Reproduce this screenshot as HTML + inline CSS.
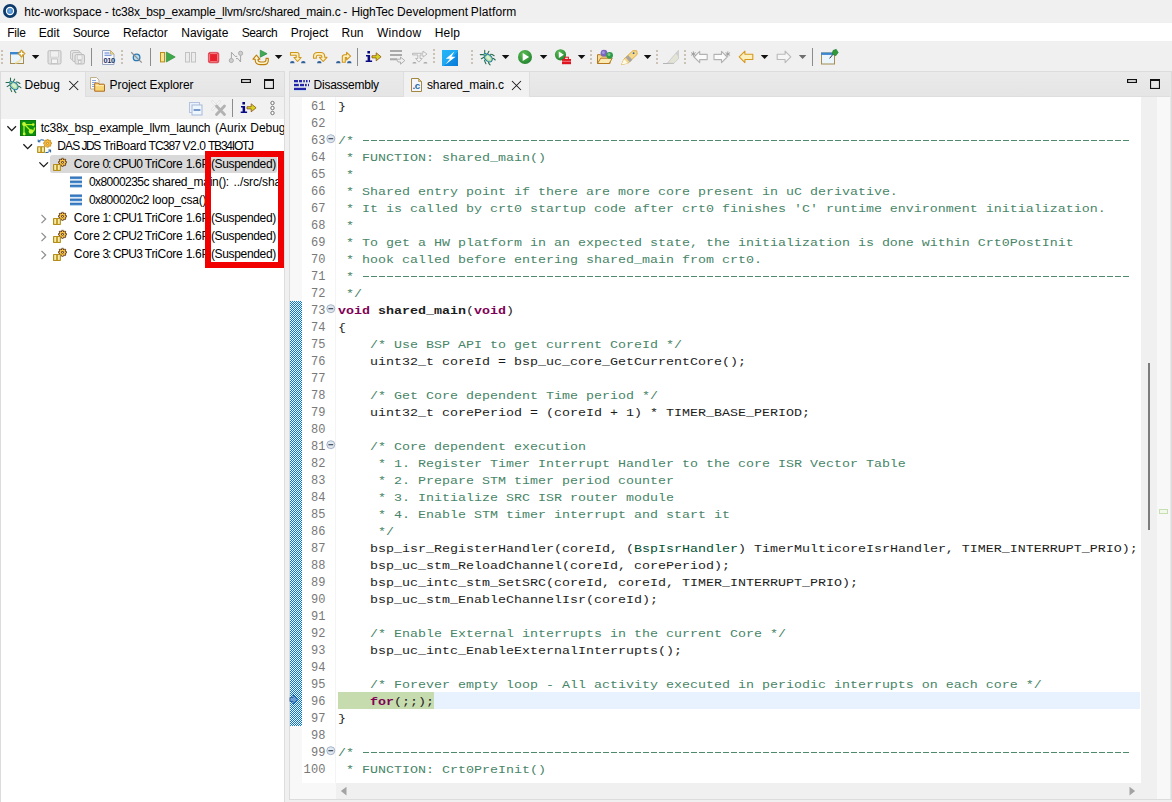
<!DOCTYPE html><html><head><meta charset="utf-8"><title>ide</title><style>
*{box-sizing:border-box}
html,body{margin:0;padding:0}
body{width:1172px;height:802px;overflow:hidden;background:#f0f0f0;font-family:"Liberation Sans",sans-serif;position:relative}
.a{position:absolute}
.t{position:absolute;white-space:pre;line-height:1;font-family:"Liberation Sans",sans-serif}
.ln{position:absolute;left:290px;width:35.6px;letter-spacing:.15px;text-align:right;height:17px;line-height:17px;margin-top:2px;font-family:"Liberation Mono",monospace;font-size:12px;color:#787878;white-space:pre}
.cl{position:absolute;left:338px;height:17px;line-height:17px;margin-top:1px;transform-origin:0 12px;transform:scaleY(0.87);font-family:"Liberation Mono",monospace;font-size:13.333px;color:#1c1c1c;white-space:pre}
.dash{position:absolute;left:362px;width:768px;height:1px;background:repeating-linear-gradient(90deg,transparent 0 1px,#4f8a6c 1px 7px,transparent 7px 8px)}
.c{color:#488568}.w{color:#7f0055;font-weight:bold}.b{font-weight:bold}.t2{color:#005032}
svg{position:absolute;overflow:visible}
</style></head><body>
<div class="a" style="left:0;top:23px;width:1172px;height:18px;background:#fff"></div>
<!-- left panel -->
<div class="a" style="left:0;top:71px;width:285px;height:731px;background:#e8e8e8;border:1px solid #dcdcdc;border-bottom:none"></div>
<div class="a" style="left:1px;top:72px;width:283px;height:25px;background:linear-gradient(#eaeaea,#e5e5e5);border-bottom:1px solid #dedede"></div><div class="a" style="left:1px;top:72px;width:85px;height:25px;background:#f1f1f1;border-right:1px solid #dedede"></div>
<div class="a" style="left:1px;top:97px;width:283px;height:22px;background:#f1f1f1"></div>
<div class="a" style="left:1px;top:119px;width:283px;height:683px;background:#fff"></div>
<div class="a" style="left:50px;top:155px;width:227px;height:18px;background:#d9d9d9;border-radius:2.5px"></div>
<!-- editor panel -->
<div class="a" style="left:289px;top:71px;width:883px;height:729px;background:#e8e8e8;border:1px solid #dcdcdc"></div>
<div class="a" style="left:290px;top:72px;width:880px;height:25px;background:linear-gradient(#eaeaea,#e5e5e5);border-bottom:1px solid #dedede"></div><div class="a" style="left:403px;top:72px;width:127px;height:25px;background:#f1f1f1;border-left:1px solid #dedede;border-right:1px solid #dedede"></div>
<div class="a" style="left:290px;top:97px;width:880px;height:702px;background:#f0f0f0"></div>
<div class="a" style="left:290px;top:97px;width:46px;height:702px;background:#f8f8f8"></div>
<div class="a" style="left:302px;top:97px;width:839px;height:686px;background:#fff"></div>
<div class="a" style="left:335px;top:97px;width:1px;height:686px;background:#f4f4f4"></div>
<div class="a" style="left:1157px;top:97px;width:13px;height:702px;background:#f8f8f8"></div>
<div class="a" style="left:338px;top:692px;width:802px;height:17px;background:#e8f2fe"></div>
<div class="a" style="left:338px;top:692px;width:96px;height:17px;background:#c6dbae"></div>
<div class="a" style="left:290px;top:301px;width:12px;height:425px;background:#0078d7;background-image:conic-gradient(#fff 25%,#0078d7 0 50%,#fff 0 75%,#0078d7 0);background-size:2px 2px"></div>
<div class="a" style="left:1148px;top:363px;width:2px;height:167px;background:#7c7c7c"></div>
<div class="a" style="left:1159px;top:509px;width:9px;height:5px;border:1px solid #c5dfb0;background:#f2f8ec"></div>
<div class="ln" style="top:97px">61</div><div class="cl" style="top:97px"><span class="k">}</span></div>
<div class="ln" style="top:114px">62</div><div class="cl" style="top:114px"></div>
<div class="ln" style="top:131px">63</div><div class="cl" style="top:131px"><span class="c">/* </span></div>
<div class="dash" style="top:140px"></div>
<div class="ln" style="top:148px">64</div><div class="cl" style="top:148px"><span class="c"> * FUNCTION: shared_main()</span></div>
<div class="ln" style="top:165px">65</div><div class="cl" style="top:165px"><span class="c"> *</span></div>
<div class="ln" style="top:182px">66</div><div class="cl" style="top:182px"><span class="c"> * Shared entry point if there are more core present in uC derivative.</span></div>
<div class="ln" style="top:199px">67</div><div class="cl" style="top:199px"><span class="c"> * It is called by crt0 startup code after crt0 finishes &#x27;C&#x27; runtime environment initialization.</span></div>
<div class="ln" style="top:216px">68</div><div class="cl" style="top:216px"><span class="c"> *</span></div>
<div class="ln" style="top:233px">69</div><div class="cl" style="top:233px"><span class="c"> * To get a HW platform in an expected state, the initialization is done within Crt0PostInit</span></div>
<div class="ln" style="top:250px">70</div><div class="cl" style="top:250px"><span class="c"> * hook called before entering shared_main from crt0.</span></div>
<div class="ln" style="top:267px">71</div><div class="cl" style="top:267px"><span class="c"> * </span></div>
<div class="dash" style="top:276px"></div>
<div class="ln" style="top:284px">72</div><div class="cl" style="top:284px"><span class="c"> */</span></div>
<div class="ln" style="top:301px">73</div><div class="cl" style="top:301px"><span class="w">void</span><span class="b"> shared_main</span><span class="k">(</span><span class="w">void</span><span class="k">)</span></div>
<div class="ln" style="top:318px">74</div><div class="cl" style="top:318px"><span class="k">{</span></div>
<div class="ln" style="top:335px">75</div><div class="cl" style="top:335px"><span class="c">    /* Use BSP API to get current CoreId */</span></div>
<div class="ln" style="top:352px">76</div><div class="cl" style="top:352px"><span class="k">    uint32_t coreId = bsp_uc_core_GetCurrentCore();</span></div>
<div class="ln" style="top:369px">77</div><div class="cl" style="top:369px"></div>
<div class="ln" style="top:386px">78</div><div class="cl" style="top:386px"><span class="c">    /* Get Core dependent Time period */</span></div>
<div class="ln" style="top:403px">79</div><div class="cl" style="top:403px"><span class="k">    uint32_t corePeriod = (coreId + 1) * TIMER_BASE_PERIOD;</span></div>
<div class="ln" style="top:420px">80</div><div class="cl" style="top:420px"></div>
<div class="ln" style="top:437px">81</div><div class="cl" style="top:437px"><span class="c">    /* Core dependent execution</span></div>
<div class="ln" style="top:454px">82</div><div class="cl" style="top:454px"><span class="c">     * 1. Register Timer Interrupt Handler to the core ISR Vector Table</span></div>
<div class="ln" style="top:471px">83</div><div class="cl" style="top:471px"><span class="c">     * 2. Prepare STM timer period counter</span></div>
<div class="ln" style="top:488px">84</div><div class="cl" style="top:488px"><span class="c">     * 3. Initialize SRC ISR router module</span></div>
<div class="ln" style="top:505px">85</div><div class="cl" style="top:505px"><span class="c">     * 4. Enable STM timer interrupt and start it</span></div>
<div class="ln" style="top:522px">86</div><div class="cl" style="top:522px"><span class="c">     */</span></div>
<div class="ln" style="top:539px">87</div><div class="cl" style="top:539px"><span class="k">    bsp_isr_RegisterHandler(coreId, (</span><span class="t2">BspIsrHandler</span><span class="k">) TimerMulticoreIsrHandler, TIMER_INTERRUPT_PRIO);</span></div>
<div class="ln" style="top:556px">88</div><div class="cl" style="top:556px"><span class="k">    bsp_uc_stm_ReloadChannel(coreId, corePeriod);</span></div>
<div class="ln" style="top:573px">89</div><div class="cl" style="top:573px"><span class="k">    bsp_uc_intc_stm_SetSRC(coreId, coreId, TIMER_INTERRUPT_PRIO);</span></div>
<div class="ln" style="top:590px">90</div><div class="cl" style="top:590px"><span class="k">    bsp_uc_stm_EnableChannelIsr(coreId);</span></div>
<div class="ln" style="top:607px">91</div><div class="cl" style="top:607px"></div>
<div class="ln" style="top:624px">92</div><div class="cl" style="top:624px"><span class="c">    /* Enable External interrupts in the current Core */</span></div>
<div class="ln" style="top:641px">93</div><div class="cl" style="top:641px"><span class="k">    bsp_uc_intc_EnableExternalInterrupts();</span></div>
<div class="ln" style="top:658px">94</div><div class="cl" style="top:658px"></div>
<div class="ln" style="top:675px">95</div><div class="cl" style="top:675px"><span class="c">    /* Forever empty loop - All activity executed in periodic interrupts on each core */</span></div>
<div class="ln" style="top:692px">96</div><div class="cl" style="top:692px"><span class="k">    </span><span class="w">for</span><span class="k">(;;);</span></div>
<div class="ln" style="top:709px">97</div><div class="cl" style="top:709px"><span class="k">}</span></div>
<div class="ln" style="top:726px">98</div><div class="cl" style="top:726px"></div>
<div class="ln" style="top:743px">99</div><div class="cl" style="top:743px"><span class="c">/* </span></div>
<div class="dash" style="top:752px"></div>
<div class="ln" style="top:760px">100</div><div class="cl" style="top:760px"><span class="c"> * FUNCTION: Crt0PreInit()</span></div>
<div class="t" style="left:24.3px;top:6px;font-size:12px;letter-spacing:-0.006px;color:#000;font-weight:400">htc-workspace</div>
<div class="t" style="left:104.8px;top:6px;font-size:12px;letter-spacing:1.000px;color:#000;font-weight:400">-</div>
<div class="t" style="left:112.1px;top:6px;font-size:12px;letter-spacing:-0.193px;color:#000;font-weight:400">tc38x_bsp_example_llvm/src/shared_main.c</div>
<div class="t" style="left:343.3px;top:6px;font-size:12px;letter-spacing:0.900px;color:#000;font-weight:400">-</div>
<div class="t" style="left:351.5px;top:6px;font-size:12px;letter-spacing:-0.166px;color:#000;font-weight:400">HighTec</div>
<div class="t" style="left:397.0px;top:6px;font-size:12px;letter-spacing:0.026px;color:#000;font-weight:400">Development</div>
<div class="t" style="left:470.8px;top:6px;font-size:12px;letter-spacing:0.114px;color:#000;font-weight:400">Platform</div>
<div class="t" style="left:7.2px;top:27px;font-size:12px;letter-spacing:-0.236px;color:#000;font-weight:400">File</div>
<div class="t" style="left:38.7px;top:27px;font-size:12px;letter-spacing:0.053px;color:#000;font-weight:400">Edit</div>
<div class="t" style="left:72.7px;top:27px;font-size:12px;letter-spacing:-0.189px;color:#000;font-weight:400">Source</div>
<div class="t" style="left:122.9px;top:27px;font-size:12px;letter-spacing:-0.082px;color:#000;font-weight:400">Refactor</div>
<div class="t" style="left:181.3px;top:27px;font-size:12px;letter-spacing:-0.047px;color:#000;font-weight:400">Navigate</div>
<div class="t" style="left:241.7px;top:27px;font-size:12px;letter-spacing:-0.405px;color:#000;font-weight:400">Search</div>
<div class="t" style="left:290.8px;top:27px;font-size:12px;letter-spacing:0.049px;color:#000;font-weight:400">Project</div>
<div class="t" style="left:341.6px;top:27px;font-size:12px;letter-spacing:-0.105px;color:#000;font-weight:400">Run</div>
<div class="t" style="left:376.9px;top:27px;font-size:12px;letter-spacing:0.319px;color:#000;font-weight:400">Window</div>
<div class="t" style="left:434.8px;top:27px;font-size:12px;letter-spacing:0.128px;color:#000;font-weight:400">Help</div>
<div class="t" style="left:24.6px;top:79px;font-size:12px;letter-spacing:-0.035px;color:#000;font-weight:400">Debug</div>
<div class="t" style="left:109.6px;top:79px;font-size:12px;letter-spacing:-0.092px;color:#000;font-weight:400">Project Explorer</div>
<div class="t" style="left:313.6px;top:79px;font-size:12px;letter-spacing:-0.256px;color:#000;font-weight:400">Disassembly</div>
<div class="t" style="left:427.0px;top:79px;font-size:12px;letter-spacing:-0.148px;color:#000;font-weight:400">shared_main.c</div>
<div class="t" style="left:40.7px;top:122px;font-size:12px;letter-spacing:-0.255px;color:#000;font-weight:400">tc38x_bsp_example_llvm_launch</div>
<div class="t" style="left:215.0px;top:122px;font-size:12px;letter-spacing:0.026px;color:#000;font-weight:400">(Aurix</div>
<div class="t" style="left:250.3px;top:122px;font-size:12px;letter-spacing:-0.035px;color:#000;font-weight:400">Debug</div>
<div class="t" style="left:57.3px;top:140px;font-size:12px;letter-spacing:-0.863px;color:#000;font-weight:400">DAS</div>
<div class="t" style="left:81.4px;top:140px;font-size:12px;letter-spacing:-1.391px;color:#000;font-weight:400">JDS</div>
<div class="t" style="left:103.2px;top:140px;font-size:12px;letter-spacing:-0.347px;color:#000;font-weight:400">TriBoard</div>
<div class="t" style="left:148.6px;top:140px;font-size:12px;letter-spacing:-0.946px;color:#000;font-weight:400">TC387</div>
<div class="t" style="left:182.5px;top:140px;font-size:12px;letter-spacing:-0.397px;color:#000;font-weight:400">V2.0</div>
<div class="t" style="left:208.0px;top:140px;font-size:12px;letter-spacing:-1.223px;color:#000;font-weight:400">TB34IOTJ</div>
<div class="t" style="left:73.7px;top:158px;font-size:12px;letter-spacing:0.046px;color:#000;font-weight:400">Core</div>
<div class="t" style="left:102.5px;top:158px;font-size:12px;letter-spacing:-1.208px;color:#000;font-weight:400">0:</div>
<div class="t" style="left:113.1px;top:158px;font-size:12px;letter-spacing:-0.754px;color:#000;font-weight:400">CPU0</div>
<div class="t" style="left:144.8px;top:158px;font-size:12px;letter-spacing:-0.280px;color:#000;font-weight:400">TriCore</div>
<div class="t" style="left:185.7px;top:158px;font-size:12px;letter-spacing:-0.322px;color:#000;font-weight:400">1.6P</div>
<div class="t" style="left:210.9px;top:158px;font-size:12px;letter-spacing:-0.338px;color:#000;font-weight:400">(Suspended)</div>
<div class="t" style="left:88.9px;top:176px;font-size:12px;letter-spacing:-0.539px;color:#000;font-weight:400">0x8000235c</div>
<div class="t" style="left:152.2px;top:176px;font-size:12px;letter-spacing:-0.286px;color:#000;font-weight:400">shared_main():</div>
<div class="t" style="left:233.5px;top:176px;font-size:12px;letter-spacing:-0.109px;color:#000;font-weight:400">../src/sha</div>
<div class="t" style="left:88.9px;top:194px;font-size:12px;letter-spacing:-0.539px;color:#000;font-weight:400">0x800020c2</div>
<div class="t" style="left:152.2px;top:194px;font-size:12px;letter-spacing:-0.183px;color:#000;font-weight:400">loop_csa()</div>
<div class="t" style="left:73.7px;top:212px;font-size:12px;letter-spacing:0.046px;color:#000;font-weight:400">Core</div>
<div class="t" style="left:102.5px;top:212px;font-size:12px;letter-spacing:-1.208px;color:#000;font-weight:400">1:</div>
<div class="t" style="left:113.1px;top:212px;font-size:12px;letter-spacing:-0.754px;color:#000;font-weight:400">CPU1</div>
<div class="t" style="left:144.8px;top:212px;font-size:12px;letter-spacing:-0.280px;color:#000;font-weight:400">TriCore</div>
<div class="t" style="left:185.7px;top:212px;font-size:12px;letter-spacing:-0.322px;color:#000;font-weight:400">1.6P</div>
<div class="t" style="left:210.9px;top:212px;font-size:12px;letter-spacing:-0.338px;color:#000;font-weight:400">(Suspended)</div>
<div class="t" style="left:73.7px;top:230px;font-size:12px;letter-spacing:0.046px;color:#000;font-weight:400">Core</div>
<div class="t" style="left:102.5px;top:230px;font-size:12px;letter-spacing:-1.208px;color:#000;font-weight:400">2:</div>
<div class="t" style="left:113.1px;top:230px;font-size:12px;letter-spacing:-0.754px;color:#000;font-weight:400">CPU2</div>
<div class="t" style="left:144.8px;top:230px;font-size:12px;letter-spacing:-0.280px;color:#000;font-weight:400">TriCore</div>
<div class="t" style="left:185.7px;top:230px;font-size:12px;letter-spacing:-0.322px;color:#000;font-weight:400">1.6P</div>
<div class="t" style="left:210.9px;top:230px;font-size:12px;letter-spacing:-0.338px;color:#000;font-weight:400">(Suspended)</div>
<div class="t" style="left:73.7px;top:248px;font-size:12px;letter-spacing:0.046px;color:#000;font-weight:400">Core</div>
<div class="t" style="left:102.5px;top:248px;font-size:12px;letter-spacing:-1.208px;color:#000;font-weight:400">3:</div>
<div class="t" style="left:113.1px;top:248px;font-size:12px;letter-spacing:-0.754px;color:#000;font-weight:400">CPU3</div>
<div class="t" style="left:144.8px;top:248px;font-size:12px;letter-spacing:-0.280px;color:#000;font-weight:400">TriCore</div>
<div class="t" style="left:185.7px;top:248px;font-size:12px;letter-spacing:-0.322px;color:#000;font-weight:400">1.6P</div>
<div class="t" style="left:210.9px;top:248px;font-size:12px;letter-spacing:-0.338px;color:#000;font-weight:400">(Suspended)</div>
<div class="a" style="left:284px;top:97px;width:5px;height:705px;background:#f0f0f0;border-left:1px solid #dcdcdc"></div>
<!-- red box -->
<div class="a" style="left:205px;top:151px;width:79px;height:117px;border:6px solid #f00000"></div>
<svg width="1172" height="802" viewBox="0 0 1172 802" style="left:0;top:0">
<circle cx="10" cy="11" r="7" fill="#0b3a6b"/><circle cx="10" cy="11" r="4.2" fill="#fff"/><circle cx="10" cy="11" r="3" fill="#4f8fcf"/><circle cx="10" cy="11" r="1.4" fill="#6aa5dc"/>
<rect x="1.1" y="50.1" width="1.8" height="1.8" fill="#c4b8a6"/>
<rect x="1.1" y="54.1" width="1.8" height="1.8" fill="#c4b8a6"/>
<rect x="1.1" y="58.1" width="1.8" height="1.8" fill="#c4b8a6"/>
<rect x="1.1" y="62.1" width="1.8" height="1.8" fill="#c4b8a6"/>
<rect x="10.5" y="52.5" width="13" height="11" fill="#e9f4fc" stroke="#a68c4e"/><rect x="10" y="52" width="11" height="2.4" fill="#3b86cf"/><path d="M15 63 Q21 62 22 56" stroke="#f3e3a8" stroke-width="1.6" fill="none"/><path d="M21.5 49.8l3.6 3.8-3.6 3.8-3.6-3.8z" fill="#d6a531" stroke="#b98a1e" stroke-width=".6"/><path d="M21.5 51.6v4M19.5 53.6h4" stroke="#fff" stroke-width="1.1"/>
<path d="M31.8 55h7.6l-3.8 4.1z" fill="#111"/>
<rect x="48.0" y="50.5" width="13" height="13.5" rx="1.5" fill="#e2e2e2" stroke="#bcbcbc"/><rect x="50.5" y="51" width="8" height="6.1" fill="#f0f0f0" stroke="#c6c6c6" stroke-width=".6"/><rect x="51.5" y="59.0" width="6" height="4.5" fill="#f4f4f4" stroke="#b8b8b8" stroke-width=".7"/>
<rect x="70.5" y="50.5" width="9" height="9" rx="1.5" fill="#e6e6e6" stroke="#c4c4c4"/><rect x="72.5" y="52.5" width="9" height="9" rx="1.5" fill="#e6e6e6" stroke="#c4c4c4"/>
<rect x="75.0" y="54.5" width="9.5" height="9.5" rx="1.5" fill="#e2e2e2" stroke="#bcbcbc"/><rect x="77.5" y="55" width="4.5" height="4.4" fill="#f0f0f0" stroke="#c6c6c6" stroke-width=".6"/><rect x="78.5" y="60.5" width="2.5" height="3.0" fill="#f4f4f4" stroke="#b8b8b8" stroke-width=".7"/>
<rect x="91.0" y="48" width="1" height="18" fill="#8c8c8c"/>
<path d="M102.5 50.5h8l3.5 3.5v10.5h-11.5z" fill="#f6f8fc" stroke="#9aa7c4"/><path d="M110.5 50.5l3.5 3.5h-3.5z" fill="#e9d9a8" stroke="#c2a863" stroke-width=".8"/><path d="M104.5 53h5M104.5 55.3h7" stroke="#5b7fd1" stroke-width="1.1"/><text x="103.4" y="63.3" font-family="Liberation Sans" font-weight="700" font-size="7.4" fill="#1a2d5e" letter-spacing="-.3">010</text>
<rect x="121.1" y="50.1" width="1.8" height="1.8" fill="#c4b8a6"/>
<rect x="121.1" y="54.1" width="1.8" height="1.8" fill="#c4b8a6"/>
<rect x="121.1" y="58.1" width="1.8" height="1.8" fill="#c4b8a6"/>
<rect x="121.1" y="62.1" width="1.8" height="1.8" fill="#c4b8a6"/>
<circle cx="136.6" cy="57.4" r="3.3" fill="#bcdcf0" stroke="#2b79b3" stroke-width="1.3"/><path d="M131.2 52.2L141.8 62.6" stroke="#8f8f8f" stroke-width="1.2"/>
<rect x="150.0" y="48" width="1" height="18" fill="#8c8c8c"/>
<rect x="160.5" y="52.5" width="4" height="9.4" fill="#fbe38e" stroke="#b98d1a"/><path d="M166.3 52l8.9 5-8.9 5z" fill="#3fa949" stroke="#2f8c3a" stroke-width=".7"/>
<rect x="185.5" y="52.5" width="4" height="9.5" fill="#ececec" stroke="#c2c2c2"/><rect x="191.5" y="52.5" width="4" height="9.5" fill="#ececec" stroke="#c2c2c2"/>
<rect x="208.4" y="52.4" width="10.4" height="10.4" rx="1.6" fill="#e8202c" stroke="#d8505a" stroke-width=".9"/><rect x="209.6" y="53.6" width="8" height="8" rx=".8" fill="none" stroke="#f59aa0" stroke-width=".8"/>
<path d="M231.4 58.4V52.2l3.8 4.2h2M236 58.6h2l2.6 3.4v-6.6" fill="none" stroke="#a6a6a6" stroke-width="1"/><circle cx="231.3" cy="60.5" r="2.1" fill="#cfcfcf" stroke="#a2a2a2" stroke-width=".8"/><circle cx="240.6" cy="53.3" r="2.1" fill="#cfcfcf" stroke="#a2a2a2" stroke-width=".8"/>
<path d="M256.4 55.1l3.5 4.1h-1.9v.6q0 2.2 2.6 2.2h3q2.4 0 2.4-2.2v-1.4h2.3v1.8q0 4.4-4.4 4.4h-3.8q-4.9 0-4.9-4.6v-.8h-2.2z" fill="#fdf4cf" stroke="#bd7f0c" stroke-width="1.1" stroke-linejoin="round"/><path d="M260.3 50.2l6.8 3.5-6.8 3.5z" fill="#43a853" stroke="#1f8a3c" stroke-width=".7"/>
<path d="M274.8 55h7.6l-3.8 4.1z" fill="#111"/>
<path d="M290.5 52.5h6.5q2 0 2 2v3h2.2l-3.6 4-3.6-4h2.2v-2.2h-5.7z" fill="#fdeebb" stroke="#cf961f" stroke-width="1.1" stroke-linejoin="round"/>
<path d="M290 63.2a2.3 2.3 0 0 1 4.6 0z" fill="#2f5f96"/>
<path d="M301 63.2a2.3 2.3 0 0 1 4.6 0z" fill="#2f5f96"/>
<path d="M313.5 58.3v-1.8q0-4 4-4h3.2q4 0 4 4v0.8h2.3l-3.8 4.2-3.8-4.2h2.5v-0.3q0-1.7-1.7-1.7h-2.2q-1.7 0-1.7 1.7v1.3z" fill="#fdeebb" stroke="#cf961f" stroke-width="1.1" stroke-linejoin="round"/>
<path d="M317 63.2a2.3 2.3 0 0 1 4.6 0z" fill="#2f5f96"/>
<path d="M342.3 62.3v-5.3q0-2.3 2.3-2.3h2v-2.4l4 3.8-4 3.8v-2.4h-1.3v4.8z" fill="#fdeebb" stroke="#cf961f" stroke-width="1.1" stroke-linejoin="round"/>
<path d="M336 63.2a2.3 2.3 0 0 1 4.6 0z" fill="#2f5f96"/>
<path d="M347 63.2a2.3 2.3 0 0 1 4.6 0z" fill="#2f5f96"/>
<rect x="357.0" y="48" width="1" height="18" fill="#8c8c8c"/>
<path d="M367.4 51h2.6v2.5h-2.6zM366.0 55h4.1v5.6h2v1.4h-6.4v-1.4h1.9v-4.2h-1.6z" fill="#0a0a82"/><path d="M372 55.7h4.2v-2.9l4.9 4-4.9 4v-2.9h-4.2z" fill="#d6d422" stroke="#8a4a0c" stroke-width=".75" stroke-linejoin="round"/>
<path d="M390 51h12M390 55h12M390 59.2h7" stroke="#a9a9a9" stroke-width="2"/><path d="M396.5 59.2h4v-2.2l4.3 3.6-4.3 3.6v-2.2h-2.5z" fill="#f0f0f0" stroke="#a9a9a9" stroke-width=".9"/>
<path d="M412.5 53.3h10.5v-2.2l4 3-4 3v-2.2h-3v3.6h2.2l-3.3 3.6-3.3-3.6h2.2v-3.6h-5.3z" fill="#f3f3f3" stroke="#b4b4b4" stroke-width=".9" stroke-linejoin="round"/>
<path d="M412.4 63.4a2 1.4 0 0 1 4 0zM423.4 63.4a2 1.4 0 0 1 4 0z" fill="#a8a8a8"/>
<rect x="433.1" y="49.1" width="1.8" height="1.8" fill="#c4b8a6"/>
<rect x="433.1" y="53.1" width="1.8" height="1.8" fill="#c4b8a6"/>
<rect x="433.1" y="57.1" width="1.8" height="1.8" fill="#c4b8a6"/>
<rect x="433.1" y="61.1" width="1.8" height="1.8" fill="#c4b8a6"/>
<defs><linearGradient id="lg1" x1="0" y1="0" x2="1" y2="1"><stop offset="0" stop-color="#22b4f6"/><stop offset=".55" stop-color="#1ea7f2"/><stop offset=".56" stop-color="#0f8fe6"/><stop offset="1" stop-color="#0a7bd6"/></linearGradient></defs><rect x="442" y="50" width="16" height="16" fill="url(#lg1)"/><path d="M454.4 51.6l-8.6 7.2h4.2l-4.4 5.8 10-7.8h-4.2z" fill="#fff"/>
<rect x="471.1" y="50.1" width="1.8" height="1.8" fill="#c4b8a6"/>
<rect x="471.1" y="54.1" width="1.8" height="1.8" fill="#c4b8a6"/>
<rect x="471.1" y="58.1" width="1.8" height="1.8" fill="#c4b8a6"/>
<rect x="471.1" y="62.1" width="1.8" height="1.8" fill="#c4b8a6"/>
<g transform="translate(474.23 -27.80)"><path d="M10.5 78v2.8M14.7 79.1l-1.4 2.6M6 82.4h3.2M7.1 86.6l2.7-1.6M10.2 88.2l.6 1.4.9 2M14.3 90l.3 1.2 1.3 1.5M16.2 82.1l1.8.2 1.9 1.2M18 86.2l1.4.2 1.6 1.4" stroke="#2a6b4a" stroke-width="1.05" fill="none" stroke-linecap="round"/><ellipse cx="14.07" cy="85.8" rx="4.5" ry="3.2" transform="rotate(42 14.07 85.8)" fill="#b4dda0" stroke="#1d78a2" stroke-width="1.1"/><ellipse cx="14.2" cy="85.6" rx="2.6" ry="1.5" transform="rotate(42 14.2 85.6)" fill="#daf0cf"/><circle cx="10.8" cy="82.5" r="1.35" fill="#8fc87a" stroke="#1d78a2" stroke-width=".9"/></g>
<path d="M501.8 55h7.6l-3.8 4.1z" fill="#111"/>
<defs><radialGradient id="rg1" cx=".4" cy=".3" r=".8"><stop offset="0" stop-color="#5dbb55"/><stop offset="1" stop-color="#1d7f2c"/></radialGradient></defs>
<circle cx="525" cy="57" r="7" fill="url(#rg1)"/><path d="M522.7 53l6.4 4-6.4 4z" fill="#fff"/>
<path d="M539.8 55h7.6l-3.8 4.1z" fill="#111"/>
<circle cx="560.5" cy="54.8" r="5.6" fill="url(#rg1)"/><path d="M558.8 51.6l5 3.2-5 3.2z" fill="#fff"/><rect x="562" y="59" width="9" height="5.2" fill="#e0141e"/><rect x="564.6" y="57.2" width="3.8" height="2.2" fill="none" stroke="#e0141e" stroke-width="1"/><path d="M562 61.3h9" stroke="#f7a6aa" stroke-width=".7"/>
<path d="M577.8 55h7.6l-3.8 4.1z" fill="#111"/>
<rect x="590.1" y="50.1" width="1.8" height="1.8" fill="#c4b8a6"/>
<rect x="590.1" y="54.1" width="1.8" height="1.8" fill="#c4b8a6"/>
<rect x="590.1" y="58.1" width="1.8" height="1.8" fill="#c4b8a6"/>
<rect x="590.1" y="62.1" width="1.8" height="1.8" fill="#c4b8a6"/>
<path d="M597.5 63.5v-8.8h3l1 1.2h8.5v7.6z" fill="#f7dc94" stroke="#b7791f" stroke-width="1"/><path d="M597.5 63.5l3.2-5.3h11.5l-3 5.3z" fill="#fbe9b4" stroke="#b7791f" stroke-width="1" stroke-linejoin="round"/><circle cx="604" cy="53.2" r="3.4" fill="#7a68c0"/><circle cx="603.4" cy="52.4" r="1.5" fill="#a597dc"/><circle cx="609.6" cy="55.3" r="3.4" fill="#2f9a4a"/><circle cx="609" cy="54.5" r="1.5" fill="#74c884"/>
<path d="M621.6 64.6l2.4-5.6 9-8.4 3.8 0.2 0.4 3.6-9 8.6z" fill="#f5d88a" stroke="#d9a531" stroke-width=".8"/><path d="M625.6 57.6l4.2 4.6 2.6-2.4-4.2-4.6z" fill="#a8a4a4"/><path d="M621.6 64.6l2.4-5.6 4 4.2z" fill="#fffbe8"/><circle cx="633.6" cy="53.2" r=".9" fill="#2a5ea8"/>
<path d="M643.8 55h7.6l-3.8 4.1z" fill="#111"/>
<rect x="656.1" y="50.1" width="1.8" height="1.8" fill="#c4b8a6"/>
<rect x="656.1" y="54.1" width="1.8" height="1.8" fill="#c4b8a6"/>
<rect x="656.1" y="58.1" width="1.8" height="1.8" fill="#c4b8a6"/>
<rect x="656.1" y="62.1" width="1.8" height="1.8" fill="#c4b8a6"/>
<path d="M663 63.5h11" stroke="#b4b4b4" stroke-width="1"/><path d="M667.5 63l8-9.5 3-3.3v8.5l-4.8 4.6z" fill="#e3e3d6" stroke="#c4c4c4" stroke-width=".7"/><path d="M675.5 53.5l3-3.3v6.6z" fill="#cfcfcf"/>
<rect x="684.1" y="50.1" width="1.8" height="1.8" fill="#c4b8a6"/>
<rect x="684.1" y="54.1" width="1.8" height="1.8" fill="#c4b8a6"/>
<rect x="684.1" y="58.1" width="1.8" height="1.8" fill="#c4b8a6"/>
<rect x="684.1" y="62.1" width="1.8" height="1.8" fill="#c4b8a6"/>
<path d="M694 57.0l5.7 -5.7v3.08h7.50v5.24h-7.50v3.08z" fill="#fbfbfb" stroke="#b2b2b2" stroke-width="1.1" stroke-linejoin="round"/>
<path d="M693.4 51.4v5.2M691.1 52.6l4.6 2.8M691.1 55.4l4.6-2.8" stroke="#9a9a9a" stroke-width=".9"/>
<path d="M714 57.0l5.7 -5.7v3.08h7.50v5.24h-7.50v3.08z" fill="#fbfbfb" stroke="#b2b2b2" stroke-width="1.1" stroke-linejoin="round" transform="translate(1441.2 0) scale(-1 1)"/>
<path d="M727.8 51.4v5.2M725.5 52.6l4.6 2.8M725.5 55.4l4.6-2.8" stroke="#9a9a9a" stroke-width=".9"/>
<path d="M739.2 56.900000000000006l5.7 -5.7v3.08h7.90v5.24h-7.90v3.08z" fill="#fdf0bf" stroke="#d8981f" stroke-width="1.1" stroke-linejoin="round"/>
<path d="M760.8 55h7.6l-3.8 4.1z" fill="#111"/>
<path d="M777.2 56.900000000000006l5.7 -5.7v3.08h7.90v5.24h-7.90v3.08z" fill="#f6f6f6" stroke="#b9b9b9" stroke-width="1.1" stroke-linejoin="round" transform="translate(1568.0 0) scale(-1 1)"/>
<path d="M798.8 55h7.6l-3.8 4.1z" fill="#6e6e6e"/>
<rect x="812.0" y="48" width="1" height="18" fill="#8c8c8c"/>
<rect x="821.5" y="53" width="13" height="11" fill="#eaf5fc" stroke="#a68c4e"/><rect x="821" y="52.5" width="14" height="2.4" fill="#3b86cf"/><path d="M833 50.5l3.2-1.2 2 3.2-2.4 3.2-3.6-1.6z" fill="#2f9a3a" stroke="#1f7a2a" stroke-width=".6"/><path d="M832.6 54.8l-3 3.6" stroke="#333" stroke-width="1"/>
<g transform="translate(0.00 0.00)"><path d="M10.5 78v2.8M14.7 79.1l-1.4 2.6M6 82.4h3.2M7.1 86.6l2.7-1.6M10.2 88.2l.6 1.4.9 2M14.3 90l.3 1.2 1.3 1.5M16.2 82.1l1.8.2 1.9 1.2M18 86.2l1.4.2 1.6 1.4" stroke="#2a6b4a" stroke-width="1.05" fill="none" stroke-linecap="round"/><ellipse cx="14.07" cy="85.8" rx="4.5" ry="3.2" transform="rotate(42 14.07 85.8)" fill="#b4dda0" stroke="#1d78a2" stroke-width="1.1"/><ellipse cx="14.2" cy="85.6" rx="2.6" ry="1.5" transform="rotate(42 14.2 85.6)" fill="#daf0cf"/><circle cx="10.8" cy="82.5" r="1.35" fill="#8fc87a" stroke="#1d78a2" stroke-width=".9"/></g>
<path d="M69.2 81l9 9M78.2 81l-9 9" stroke="#1a1a1a" stroke-width="1.05" fill="none"/>
<path d="M512 81l9 9M521 81l-9 9" stroke="#1a1a1a" stroke-width="1.05" fill="none"/>
<path d="M90.5 77.5h6l2.5 2.5v9h-8.5z" fill="#fafafa" stroke="#b9a980" stroke-width=".9"/><path d="M92 80.5h4M92 82.5h4M92 84.5h3M92 86.5h3" stroke="#6f93d6" stroke-width=".8"/><path d="M94.7 91.2v-7.6q0-.6.6-.6h2.6l1 1.2h5q.6 0 .6.6v6.4z" fill="#f8d676" stroke="#b06a1c" stroke-width="1" stroke-linejoin="round"/><path d="M95.6 85.7h8.2" stroke="#fdeeb8" stroke-width="1"/>
<rect x="241.6" y="79.6" width="8.8" height="2.8" fill="#fff" stroke="#111" stroke-width="1.2"/>
<rect x="264.55" y="79.55" width="8.9" height="8.9" fill="none" stroke="#111" stroke-width="1.1"/><rect x="264" y="79" width="10" height="2" fill="#111"/>
<rect x="1127.6" y="79.6" width="8.8" height="2.8" fill="#fff" stroke="#111" stroke-width="1.2"/>
<rect x="1150.55" y="79.55" width="8.9" height="8.9" fill="none" stroke="#111" stroke-width="1.1"/><rect x="1150" y="79" width="10" height="2" fill="#111"/>
<rect x="189.5" y="102.5" width="10" height="10" fill="#eaf3fb" stroke="#b4c3df"/><rect x="192" y="105" width="10" height="10" fill="#eef7fd" stroke="#a7b9d9"/><path d="M193.6 110h6.8" stroke="#1f55a4" stroke-width="1.15"/>
<path d="M212.5 101.5l7 8M219.5 101.5l-7 8" stroke="#dcdcdc" stroke-width="2.6" stroke-linecap="round"/><path d="M212.5 101.5l7 8M219.5 101.5l-7 8" stroke="#f6f6f6" stroke-width="1.2" stroke-linecap="round"/><path d="M216.5 106l8 8.5M224.5 106l-8 8.5" stroke="#b2b2b2" stroke-width="2.8" stroke-linecap="round"/>
<rect x="232.0" y="99" width="1" height="18" fill="#8c8c8c"/>
<path d="M242.39999999999998 102h2.6v2.5h-2.6zM241.0 106h4.1v5.6h2v1.4h-6.4v-1.4h1.9v-4.2h-1.6z" fill="#0a0a82"/><path d="M247 106.7h4.2v-2.9l4.9 4-4.9 4v-2.9h-4.2z" fill="#d6d422" stroke="#8a4a0c" stroke-width=".75" stroke-linejoin="round"/>
<circle cx="272.5" cy="103" r="1.7" fill="#fff" stroke="#555" stroke-width=".8"/>
<circle cx="272.5" cy="108" r="1.7" fill="#fff" stroke="#555" stroke-width=".8"/>
<circle cx="272.5" cy="113" r="1.7" fill="#fff" stroke="#555" stroke-width=".8"/>
<path d="M7.4 126.3l4.3 4.3 4.3-4.3" stroke="#1a1a1a" stroke-width="1.3" fill="none"/>
<path d="M23.4 144.3l4.3 4.3 4.3-4.3" stroke="#1a1a1a" stroke-width="1.3" fill="none"/>
<path d="M39.4 162.4l4.3 4.3 4.3-4.3" stroke="#1a1a1a" stroke-width="1.3" fill="none"/>
<path d="M41.5 214.8l4.2 4.2-4.2 4.2" stroke="#8c8c8c" stroke-width="1.2" fill="none"/>
<path d="M41.5 232.8l4.2 4.2-4.2 4.2" stroke="#8c8c8c" stroke-width="1.2" fill="none"/>
<path d="M41.5 250.8l4.2 4.2-4.2 4.2" stroke="#8c8c8c" stroke-width="1.2" fill="none"/>
<rect x="20" y="120" width="16" height="16" fill="#0c8f10"/><rect x="20.5" y="120.5" width="15" height="15" fill="none" stroke="#0a7a0c"/><path d="M24 124l8 8M24 124v10M24 124.6h9M32 132q2.5-1 2.6-4.5" stroke="#b4f21e" stroke-width="1.3" fill="none"/><circle cx="24" cy="124" r="1.9" fill="#c6f83a"/><circle cx="31" cy="131.5" r="2.3" fill="#c6f83a"/><circle cx="33.2" cy="124.6" r="1.3" fill="#c6f83a"/><circle cx="24.2" cy="134" r="1.4" fill="#c6f83a"/>
<g transform="translate(47.6 143.3)"><circle r="3.35" fill="#c9942c"/><rect x="-1" y="-4.35" width="2" height="2.2" fill="#c9942c" transform="rotate(0)"/><rect x="-1" y="-4.35" width="2" height="2.2" fill="#c9942c" transform="rotate(45)"/><rect x="-1" y="-4.35" width="2" height="2.2" fill="#c9942c" transform="rotate(90)"/><rect x="-1" y="-4.35" width="2" height="2.2" fill="#c9942c" transform="rotate(135)"/><rect x="-1" y="-4.35" width="2" height="2.2" fill="#c9942c" transform="rotate(180)"/><rect x="-1" y="-4.35" width="2" height="2.2" fill="#c9942c" transform="rotate(225)"/><rect x="-1" y="-4.35" width="2" height="2.2" fill="#c9942c" transform="rotate(270)"/><rect x="-1" y="-4.35" width="2" height="2.2" fill="#c9942c" transform="rotate(315)"/><circle r="2.55" fill="#f6b93c"/><rect x="-.45" y="-3.6" width=".9" height="1.6" fill="#f6b93c" transform="rotate(0)"/><rect x="-.45" y="-3.6" width=".9" height="1.6" fill="#f6b93c" transform="rotate(45)"/><rect x="-.45" y="-3.6" width=".9" height="1.6" fill="#f6b93c" transform="rotate(90)"/><rect x="-.45" y="-3.6" width=".9" height="1.6" fill="#f6b93c" transform="rotate(135)"/><rect x="-.45" y="-3.6" width=".9" height="1.6" fill="#f6b93c" transform="rotate(180)"/><rect x="-.45" y="-3.6" width=".9" height="1.6" fill="#f6b93c" transform="rotate(225)"/><rect x="-.45" y="-3.6" width=".9" height="1.6" fill="#f6b93c" transform="rotate(270)"/><rect x="-.45" y="-3.6" width=".9" height="1.6" fill="#f6b93c" transform="rotate(315)"/><circle r="1.35" fill="#c9942c"/><circle r=".6" fill="#efe2d0"/></g>
<rect x="37.1" y="146.3" width="7.9" height="6.6" rx=".6" fill="#b48e18"/><rect x="38.300000000000004" y="147.3" width="2" height="4.6" fill="#fbeca4"/><rect x="41.9" y="147.3" width="2" height="4.6" fill="#fbeca4"/>
<path d="M44 140.2q-3-1.4-5.6 1.2M38.2 139.6v2.2h2.2" stroke="#1d5c9c" stroke-width="1" fill="none"/><path d="M45.4 152.6q3 .6 5-2.4M50.6 152.4v-2.4h-2.2" stroke="#1d5c9c" stroke-width="1" fill="none"/>
<g transform="translate(62.5 162.3)"><circle r="3.45" fill="#5e3a22"/><rect x="-1" y="-4.45" width="2" height="2.2" fill="#5e3a22" transform="rotate(0)"/><rect x="-1" y="-4.45" width="2" height="2.2" fill="#5e3a22" transform="rotate(45)"/><rect x="-1" y="-4.45" width="2" height="2.2" fill="#5e3a22" transform="rotate(90)"/><rect x="-1" y="-4.45" width="2" height="2.2" fill="#5e3a22" transform="rotate(135)"/><rect x="-1" y="-4.45" width="2" height="2.2" fill="#5e3a22" transform="rotate(180)"/><rect x="-1" y="-4.45" width="2" height="2.2" fill="#5e3a22" transform="rotate(225)"/><rect x="-1" y="-4.45" width="2" height="2.2" fill="#5e3a22" transform="rotate(270)"/><rect x="-1" y="-4.45" width="2" height="2.2" fill="#5e3a22" transform="rotate(315)"/><circle r="2.65" fill="#f8c444"/><rect x="-.45" y="-3.7" width=".9" height="1.6" fill="#f8c444" transform="rotate(0)"/><rect x="-.45" y="-3.7" width=".9" height="1.6" fill="#f8c444" transform="rotate(45)"/><rect x="-.45" y="-3.7" width=".9" height="1.6" fill="#f8c444" transform="rotate(90)"/><rect x="-.45" y="-3.7" width=".9" height="1.6" fill="#f8c444" transform="rotate(135)"/><rect x="-.45" y="-3.7" width=".9" height="1.6" fill="#f8c444" transform="rotate(180)"/><rect x="-.45" y="-3.7" width=".9" height="1.6" fill="#f8c444" transform="rotate(225)"/><rect x="-.45" y="-3.7" width=".9" height="1.6" fill="#f8c444" transform="rotate(270)"/><rect x="-.45" y="-3.7" width=".9" height="1.6" fill="#f8c444" transform="rotate(315)"/><circle r="1.35" fill="#5e3a22"/><circle r=".6" fill="#efe2d0"/></g>
<rect x="53" y="164" width="7.9" height="6.9" rx=".6" fill="#b48e18"/><rect x="54.2" y="165" width="2" height="4.9" fill="#fbeca4"/><rect x="57.8" y="165" width="2" height="4.9" fill="#fbeca4"/>
<g transform="translate(62.5 216.3)"><circle r="3.45" fill="#5e3a22"/><rect x="-1" y="-4.45" width="2" height="2.2" fill="#5e3a22" transform="rotate(0)"/><rect x="-1" y="-4.45" width="2" height="2.2" fill="#5e3a22" transform="rotate(45)"/><rect x="-1" y="-4.45" width="2" height="2.2" fill="#5e3a22" transform="rotate(90)"/><rect x="-1" y="-4.45" width="2" height="2.2" fill="#5e3a22" transform="rotate(135)"/><rect x="-1" y="-4.45" width="2" height="2.2" fill="#5e3a22" transform="rotate(180)"/><rect x="-1" y="-4.45" width="2" height="2.2" fill="#5e3a22" transform="rotate(225)"/><rect x="-1" y="-4.45" width="2" height="2.2" fill="#5e3a22" transform="rotate(270)"/><rect x="-1" y="-4.45" width="2" height="2.2" fill="#5e3a22" transform="rotate(315)"/><circle r="2.65" fill="#f8c444"/><rect x="-.45" y="-3.7" width=".9" height="1.6" fill="#f8c444" transform="rotate(0)"/><rect x="-.45" y="-3.7" width=".9" height="1.6" fill="#f8c444" transform="rotate(45)"/><rect x="-.45" y="-3.7" width=".9" height="1.6" fill="#f8c444" transform="rotate(90)"/><rect x="-.45" y="-3.7" width=".9" height="1.6" fill="#f8c444" transform="rotate(135)"/><rect x="-.45" y="-3.7" width=".9" height="1.6" fill="#f8c444" transform="rotate(180)"/><rect x="-.45" y="-3.7" width=".9" height="1.6" fill="#f8c444" transform="rotate(225)"/><rect x="-.45" y="-3.7" width=".9" height="1.6" fill="#f8c444" transform="rotate(270)"/><rect x="-.45" y="-3.7" width=".9" height="1.6" fill="#f8c444" transform="rotate(315)"/><circle r="1.35" fill="#5e3a22"/><circle r=".6" fill="#efe2d0"/></g>
<rect x="53" y="218" width="7.9" height="6.9" rx=".6" fill="#b48e18"/><rect x="54.2" y="219" width="2" height="4.9" fill="#fbeca4"/><rect x="57.8" y="219" width="2" height="4.9" fill="#fbeca4"/>
<g transform="translate(62.5 234.3)"><circle r="3.45" fill="#5e3a22"/><rect x="-1" y="-4.45" width="2" height="2.2" fill="#5e3a22" transform="rotate(0)"/><rect x="-1" y="-4.45" width="2" height="2.2" fill="#5e3a22" transform="rotate(45)"/><rect x="-1" y="-4.45" width="2" height="2.2" fill="#5e3a22" transform="rotate(90)"/><rect x="-1" y="-4.45" width="2" height="2.2" fill="#5e3a22" transform="rotate(135)"/><rect x="-1" y="-4.45" width="2" height="2.2" fill="#5e3a22" transform="rotate(180)"/><rect x="-1" y="-4.45" width="2" height="2.2" fill="#5e3a22" transform="rotate(225)"/><rect x="-1" y="-4.45" width="2" height="2.2" fill="#5e3a22" transform="rotate(270)"/><rect x="-1" y="-4.45" width="2" height="2.2" fill="#5e3a22" transform="rotate(315)"/><circle r="2.65" fill="#f8c444"/><rect x="-.45" y="-3.7" width=".9" height="1.6" fill="#f8c444" transform="rotate(0)"/><rect x="-.45" y="-3.7" width=".9" height="1.6" fill="#f8c444" transform="rotate(45)"/><rect x="-.45" y="-3.7" width=".9" height="1.6" fill="#f8c444" transform="rotate(90)"/><rect x="-.45" y="-3.7" width=".9" height="1.6" fill="#f8c444" transform="rotate(135)"/><rect x="-.45" y="-3.7" width=".9" height="1.6" fill="#f8c444" transform="rotate(180)"/><rect x="-.45" y="-3.7" width=".9" height="1.6" fill="#f8c444" transform="rotate(225)"/><rect x="-.45" y="-3.7" width=".9" height="1.6" fill="#f8c444" transform="rotate(270)"/><rect x="-.45" y="-3.7" width=".9" height="1.6" fill="#f8c444" transform="rotate(315)"/><circle r="1.35" fill="#5e3a22"/><circle r=".6" fill="#efe2d0"/></g>
<rect x="53" y="236" width="7.9" height="6.9" rx=".6" fill="#b48e18"/><rect x="54.2" y="237" width="2" height="4.9" fill="#fbeca4"/><rect x="57.8" y="237" width="2" height="4.9" fill="#fbeca4"/>
<g transform="translate(62.5 252.3)"><circle r="3.45" fill="#5e3a22"/><rect x="-1" y="-4.45" width="2" height="2.2" fill="#5e3a22" transform="rotate(0)"/><rect x="-1" y="-4.45" width="2" height="2.2" fill="#5e3a22" transform="rotate(45)"/><rect x="-1" y="-4.45" width="2" height="2.2" fill="#5e3a22" transform="rotate(90)"/><rect x="-1" y="-4.45" width="2" height="2.2" fill="#5e3a22" transform="rotate(135)"/><rect x="-1" y="-4.45" width="2" height="2.2" fill="#5e3a22" transform="rotate(180)"/><rect x="-1" y="-4.45" width="2" height="2.2" fill="#5e3a22" transform="rotate(225)"/><rect x="-1" y="-4.45" width="2" height="2.2" fill="#5e3a22" transform="rotate(270)"/><rect x="-1" y="-4.45" width="2" height="2.2" fill="#5e3a22" transform="rotate(315)"/><circle r="2.65" fill="#f8c444"/><rect x="-.45" y="-3.7" width=".9" height="1.6" fill="#f8c444" transform="rotate(0)"/><rect x="-.45" y="-3.7" width=".9" height="1.6" fill="#f8c444" transform="rotate(45)"/><rect x="-.45" y="-3.7" width=".9" height="1.6" fill="#f8c444" transform="rotate(90)"/><rect x="-.45" y="-3.7" width=".9" height="1.6" fill="#f8c444" transform="rotate(135)"/><rect x="-.45" y="-3.7" width=".9" height="1.6" fill="#f8c444" transform="rotate(180)"/><rect x="-.45" y="-3.7" width=".9" height="1.6" fill="#f8c444" transform="rotate(225)"/><rect x="-.45" y="-3.7" width=".9" height="1.6" fill="#f8c444" transform="rotate(270)"/><rect x="-.45" y="-3.7" width=".9" height="1.6" fill="#f8c444" transform="rotate(315)"/><circle r="1.35" fill="#5e3a22"/><circle r=".6" fill="#efe2d0"/></g>
<rect x="53" y="254" width="7.9" height="6.9" rx=".6" fill="#b48e18"/><rect x="54.2" y="255" width="2" height="4.9" fill="#fbeca4"/><rect x="57.8" y="255" width="2" height="4.9" fill="#fbeca4"/>
<defs><linearGradient id="sf" x1="0" y1="0" x2="0" y2="1"><stop offset="0" stop-color="#2a67ad"/><stop offset="1" stop-color="#4f93d6"/></linearGradient></defs>
<rect x="70" y="176.5" width="12" height="2.7" fill="url(#sf)"/>
<rect x="70" y="180.6" width="12" height="2.7" fill="url(#sf)"/>
<rect x="70" y="184.7" width="12" height="2.7" fill="url(#sf)"/>
<rect x="70" y="194.5" width="12" height="2.7" fill="url(#sf)"/>
<rect x="70" y="198.6" width="12" height="2.7" fill="url(#sf)"/>
<rect x="70" y="202.7" width="12" height="2.7" fill="url(#sf)"/>
<rect x="294" y="81.2" width="4" height="2" fill="#b9d4f5" opacity=".8"/><rect x="294" y="80" width="4" height="2.2" fill="#2424a6"/>
<rect x="299" y="81.2" width="3" height="2" fill="#b9d4f5" opacity=".8"/><rect x="299" y="80" width="3" height="2.2" fill="#2424a6"/>
<rect x="303.3" y="81.2" width="1.5" height="2" fill="#b9d4f5" opacity=".8"/><rect x="303.3" y="80" width="1.5" height="2.2" fill="#2424a6"/>
<rect x="306" y="81.2" width="1.5" height="2" fill="#b9d4f5" opacity=".8"/><rect x="306" y="80" width="1.5" height="2.2" fill="#2424a6"/>
<rect x="309" y="81.2" width="1" height="2" fill="#b9d4f5" opacity=".8"/><rect x="309" y="80" width="1" height="2.2" fill="#2424a6"/>
<rect x="294" y="85.10000000000001" width="4.800000000000011" height="2" fill="#b9d4f5" opacity=".8"/><rect x="294" y="83.9" width="4.800000000000011" height="2.2" fill="#2424a6"/>
<rect x="300" y="85.10000000000001" width="4" height="2" fill="#b9d4f5" opacity=".8"/><rect x="300" y="83.9" width="4" height="2.2" fill="#2424a6"/>
<rect x="305" y="85.10000000000001" width="1.6999999999999886" height="2" fill="#b9d4f5" opacity=".8"/><rect x="305" y="83.9" width="1.6999999999999886" height="2.2" fill="#2424a6"/>
<rect x="308" y="85.10000000000001" width="1" height="2" fill="#b9d4f5" opacity=".8"/><rect x="308" y="83.9" width="1" height="2.2" fill="#2424a6"/>
<rect x="294" y="89.0" width="12" height="2" fill="#b9d4f5" opacity=".8"/><rect x="294" y="87.8" width="12" height="2.2" fill="#2424a6"/>
<path d="M411.5 78.5h7l3 3v10h-10z" fill="#f3f7fd" stroke="#a3863f" stroke-width="1"/><path d="M418.5 78.5l3 3h-3z" fill="#dcc07a" stroke="#a3863f" stroke-width=".6"/><text x="412.4" y="89" font-family="Liberation Sans" font-weight="700" font-size="9.8" fill="#2a66a8" letter-spacing="-.3">.c</text>
<circle cx="330.8" cy="138.7" r="4" fill="#e1e8f0" stroke="#9dadc3" stroke-width=".9"/><path d="M328.4 138.7h4.8" stroke="#2b3a4e" stroke-width="1.1"/>
<circle cx="330.8" cy="308.7" r="4" fill="#e1e8f0" stroke="#9dadc3" stroke-width=".9"/><path d="M328.4 308.7h4.8" stroke="#2b3a4e" stroke-width="1.1"/>
<circle cx="330.8" cy="444.7" r="4" fill="#e1e8f0" stroke="#9dadc3" stroke-width=".9"/><path d="M328.4 444.7h4.8" stroke="#2b3a4e" stroke-width="1.1"/>
<circle cx="330.8" cy="750.7" r="4" fill="#e1e8f0" stroke="#9dadc3" stroke-width=".9"/><path d="M328.4 750.7h4.8" stroke="#2b3a4e" stroke-width="1.1"/>
<path d="M290 697.5h3v-2.6l4.4 4.6-4.4 4.6v-2.6h-3z" fill="#6f9fd0" stroke="#1d5a9a" stroke-width=".9" stroke-linejoin="round"/>
<path d="M346.5 786.8v8.6l-5.6-4.3z" fill="#a3a3a3"/><path d="M1129.5 786.8v8.6l5.6-4.3z" fill="#a3a3a3"/>
</svg>
</body></html>
